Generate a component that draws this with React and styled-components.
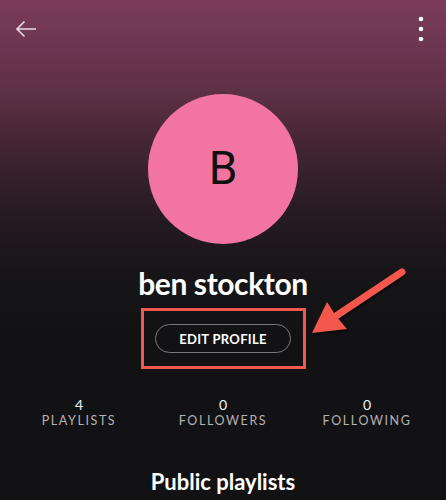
import React from 'react';
import styled, { createGlobalStyle } from 'styled-components';

const GlobalStyle = createGlobalStyle`
  html, body {
    margin: 0;
    padding: 0;
    background: #121214;
  }
  * {
    box-sizing: border-box;
  }
`;

const Screen = styled.div`
  position: relative;
  width: 446px;
  height: 500px;
  overflow: hidden;
  display: flex;
  flex-direction: column;
  align-items: center;
  font-family: Lato, 'Open Sans', sans-serif;
  color: #fff;
  background: linear-gradient(
    180deg,
    #7b3c5a 0px,
    #5e3046 90px,
    #412530 150px,
    #251b20 215px,
    #151416 285px,
    #121214 340px
  );
`;

const TopBar = styled.div`
  width: 100%;
  height: 94px;
  display: flex;
  justify-content: space-between;
  align-items: flex-start;
  padding: 17px 13px 0 14px;
`;

const IconButton = styled.button`
  background: none;
  border: none;
  padding: 0;
  width: 24px;
  height: 24px;
  display: flex;
  align-items: center;
  justify-content: center;
  cursor: pointer;
`;

const Avatar = styled.div`
  width: 150px;
  height: 150px;
  border-radius: 50%;
  background: #f275a1;
  display: flex;
  align-items: center;
  justify-content: center;
  font-family: Roboto, sans-serif;
  font-size: 46px;
  color: #111;
  padding-bottom: 2px;
`;

const Name = styled.h1`
  margin: 21px 0 0;
  font-size: 30px;
  line-height: 36px;
  font-weight: 700;
  letter-spacing: -0.4px;
`;

const Highlight = styled.div`
  margin-top: 7px;
  width: 165px;
  height: 61px;
  border: 3px solid #f2584d;
  display: flex;
  align-items: center;
  justify-content: center;
`;

const OutlineButton = styled.button`
  width: 136px;
  height: 29px;
  border-radius: 15px;
  border: 1px solid #7a7a7c;
  background: transparent;
  color: #fff;
  font-family: Lato, sans-serif;
  font-weight: 700;
  font-size: 13px;
  letter-spacing: 0.3px;
  padding: 0;
`;

const Stats = styled.div`
  width: 100%;
  display: grid;
  grid-template-columns: repeat(3, 144px);
  padding: 0 7px;
  margin-top: 27px;
`;

const Stat = styled.div`
  display: flex;
  flex-direction: column;
  align-items: center;
`;

const StatValue = styled.span`
  font-size: 14px;
  line-height: 17px;
  color: #f2f2f2;
`;

const StatLabel = styled.span`
  font-size: 12.5px;
  line-height: 16px;
  letter-spacing: 1.6px;
  color: #b3b3b3;
`;

const Section = styled.h2`
  margin: 40px 0 0;
  font-size: 22px;
  line-height: 26px;
  font-weight: 700;
`;

const Pointer = styled.svg`
  position: absolute;
  left: 300px;
  top: 260px;
  overflow: visible;
  filter: drop-shadow(1px 2px 1px rgba(0, 0, 0, 0.5));
`;

const stats = [
  { value: 4, label: 'PLAYLISTS' },
  { value: 0, label: 'FOLLOWERS' },
  { value: 0, label: 'FOLLOWING' },
];

export default function App() {
  return (
    <>
      <GlobalStyle />
      <Screen>
        <TopBar>
          <IconButton aria-label="Back">
            <svg width="22" height="18" viewBox="0 0 22 18" fill="none">
              <path
                d="M21 9H2.5M9.5 1.5L2 9l7.5 7.5"
                stroke="#eadbe2"
                strokeWidth="1.6"
              />
            </svg>
          </IconButton>
          <IconButton aria-label="More">
            <svg width="6" height="26" viewBox="0 0 6 26">
              <circle cx="3" cy="3" r="2.3" fill="#fff" />
              <circle cx="3" cy="13" r="2.3" fill="#fff" />
              <circle cx="3" cy="23" r="2.3" fill="#fff" />
            </svg>
          </IconButton>
        </TopBar>

        <Avatar>B</Avatar>
        <Name>ben stockton</Name>

        <Highlight>
          <OutlineButton>EDIT PROFILE</OutlineButton>
        </Highlight>

        <Stats>
          {stats.map(s => (
            <Stat key={s.label}>
              <StatValue>{s.value}</StatValue>
              <StatLabel>{s.label}</StatLabel>
            </Stat>
          ))}
        </Stats>

        <Section>Public playlists</Section>

        <Pointer width="110" height="80" viewBox="300 260 110 80">
          <line
            x1="402"
            y1="272"
            x2="333"
            y2="318"
            stroke="#f4584c"
            strokeWidth="7"
            strokeLinecap="round"
          />
          <polygon
            points="312,333 327,302 336,316 347,329"
            fill="#f4584c"
          />
        </Pointer>
      </Screen>
    </>
  );
}
